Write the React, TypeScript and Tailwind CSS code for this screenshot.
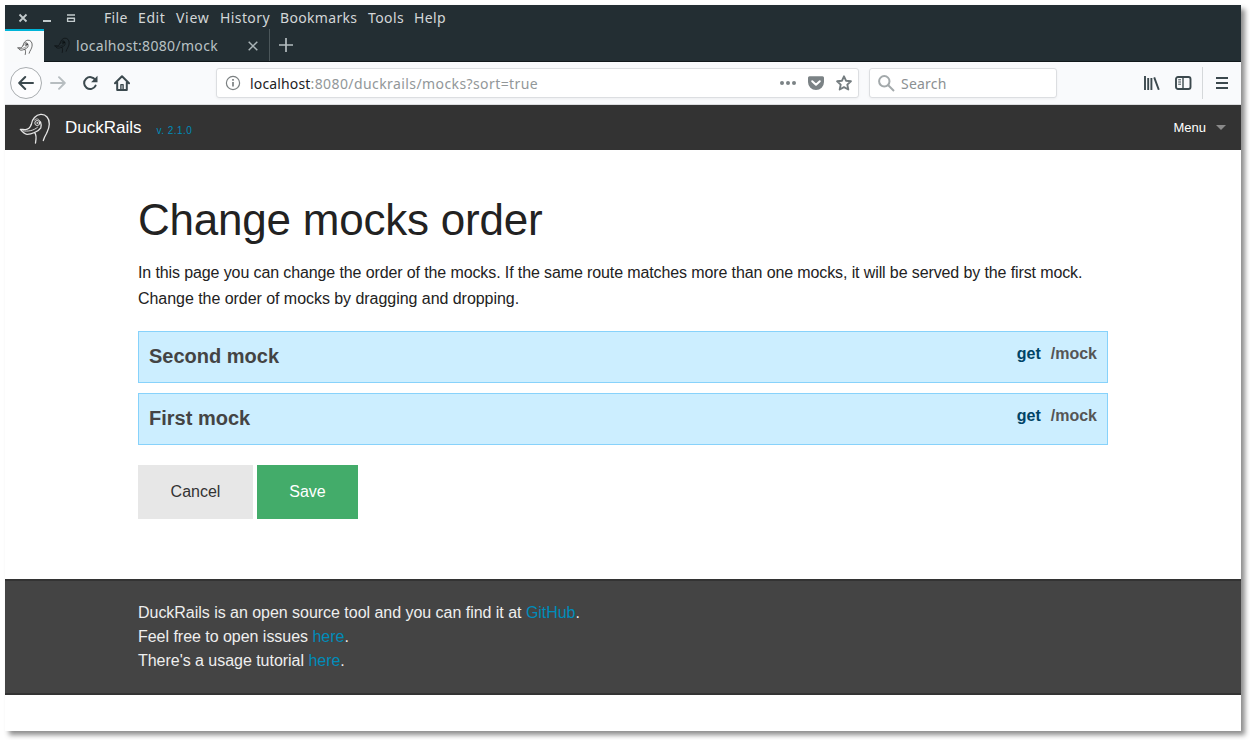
import React from "react";

const ui = "font-['Noto_Sans','Open_Sans',sans-serif]";

function Duck({ className }: { className?: string }) {
  return (
    <svg viewBox="0 0 32 32" fill="none" stroke="currentColor" strokeLinecap="round" strokeLinejoin="round" className={className}>
      <path d="M12.300 12.500C13 7 17 2.800 21.700 2.400C27 2 30.500 6.500 30.300 12C30 17.500 28.500 19 27.500 21.500C26 24 25 26 24.300 28.500" strokeWidth="1.300" />
      <path d="M12.300 12.500C11 16 9 17.500 6.500 17.600C4.500 17.800 3 17.200 1.300 17.400C3 19.500 5 22 8 22.400C12 22.500 19.500 19.500 21.800 15.800C22.500 14 22.300 12 21.500 10" strokeWidth="1.300" />
      <path d="M4 18.800C9 19.800 15 18.500 18.500 15.300" strokeWidth="0.900" />
      <path d="M15.500 20.500C17.600 22.500 17.400 26 16.500 31" strokeWidth="1.300" />
      <circle cx="18.300" cy="11" r="2.500" strokeWidth="1" />
      <circle cx="18.300" cy="11" r="0.600" strokeWidth="0.800" />
      <path d="M15.500 8C17.500 6 20 6.500 21.500 10" strokeWidth="0.800" />
    </svg>
  );
}

const menus = [
  { label: "File", cls: "w-[34px] tracking-[0.3px]" },
  { label: "Edit", cls: "w-[38px] tracking-[0.6px]" },
  { label: "View", cls: "w-[44px] tracking-[0.7px]" },
  { label: "History", cls: "w-[60px] tracking-[0.4px]" },
  { label: "Bookmarks", cls: "w-[88px] tracking-[0.33px]" },
  { label: "Tools", cls: "w-[46px] tracking-[0.4px]" },
  { label: "Help", cls: "w-[40px] tracking-[0.4px]" },
];

function MenuBar() {
  return (
    <div className="flex h-[24px] items-center text-[14px] text-[#d3d7d8]">
      <svg className="ml-[12px] h-[12px] w-[60px] shrink-0" viewBox="0 0 60 12" fill="none" stroke="#c3cbcd">
        <path d="M2.500 3.500l7 7M9.500 3.500l-7 7" strokeWidth="1.800" />
        <path d="M26 10h8" strokeWidth="2" />
        <path d="M50 4h8M50 7.200h8M50 10.400h8M50.600 7v3.500M57.400 7v3.500" strokeWidth="1.400" />
      </svg>
      <div className="ml-[27px] flex">
        {menus.map((m) => (
          <span key={m.label} className={"shrink-0 whitespace-nowrap " + m.cls}>{m.label}</span>
        ))}
      </div>
    </div>
  );
}

function Tabs() {
  return (
    <div className="flex h-[33px] border-b border-[#11181b]">
      <div className="-mb-px flex h-[33px] w-[39px] items-center justify-center border-t-2 border-[#00b4d8] bg-[#f9fafb] text-[#222]">
        <Duck className="size-[16px]" />
      </div>
      <div className="flex w-[226px] items-center border-r border-[#4b565a] bg-clip-padding pl-[10px] text-[#b9c2c4]">
        <Duck className="size-[16px] text-[#0b0e0f]" />
        <span className="ml-[6px] w-[172px] whitespace-nowrap text-[14px] tracking-[0.32px]">localhost:8080/mock</span>
        <svg className="mt-[2px] h-[10px] w-[10px]" viewBox="0 0 10 10" stroke="#aab4b7" strokeWidth="1.500">
          <path d="M.7.7l8.600 8.600M9.300.7L.7 9.300" />
        </svg>
      </div>
      <svg className="ml-[9px] mt-[9px] h-[14px] w-[14px]" viewBox="0 0 14 14" stroke="#b4bdc0" strokeWidth="1.700">
        <path d="M7 0v14M0 7h14" />
      </svg>
    </div>
  );
}

function Toolbar() {
  return (
    <div className="flex h-[43px] items-center border-b border-[#dcdddf] bg-[#f9fafc] text-[#41505a]">
      <div className="ml-[5px] flex size-[32px] shrink-0 items-center justify-center rounded-full border border-[#a9adb0] bg-[#fdfdfe]">
        <svg className="size-[16px]" viewBox="0 0 16 16" fill="none" stroke="#3c494e" strokeWidth="2" strokeLinecap="round" strokeLinejoin="round">
          <path d="M15 8H1.500M7.200 2L1.200 8l6 6" />
        </svg>
      </div>
      <svg className="ml-[8px] size-[16px]" viewBox="0 0 16 16" fill="none" stroke="#b7bdc0" strokeWidth="1.900" strokeLinecap="round" strokeLinejoin="round">
        <path d="M1 8h13.500M9 2.200L14.800 8 9 13.800" />
      </svg>
      <svg className="ml-[16px] size-[16px]" viewBox="0 0 16 16" fill="none" stroke="#3c494e" strokeWidth="2">
        <path d="M13.300 5A6 6 0 1 0 13.600 10.600" strokeLinecap="round" />
        <path d="M15.500.8v6.400H9.100z" fill="#3c494e" stroke="none" />
      </svg>
      <svg className="ml-[16px] size-[16px]" viewBox="0 0 16 16" fill="none" stroke="#3c494e" strokeWidth="2" strokeLinejoin="round" strokeLinecap="round">
        <path d="M1 8.200L8 1.200l7 7M3.200 7.500V15h9.600V7.500" />
        <path d="M6.900 14.500V9.600h2.200v4.900" strokeWidth="1.400" />
      </svg>
      <div className="ml-[86px] flex h-[30px] w-[643px] items-center rounded-[3px] border border-[#dcdee1] bg-white shadow-[0_1px_3px_rgba(0,0,0,0.05)]">
        <svg className="ml-[8px] size-[16px] shrink-0" viewBox="0 0 16 16" fill="none" stroke="#7b8082" strokeWidth="1.200">
          <circle cx="8" cy="8" r="6.600" />
          <path d="M8 7v4.600M8 4v1.700" strokeWidth="1.700" />
        </svg>
        <div className="ml-[9px] flex-1 whitespace-nowrap text-[14px] tracking-[0.41px] text-[#929799]">
          <span className="tracking-[0.15px] text-[#1c2123]">localhost</span>:8080/duckrails/mocks?sort=true
        </div>
        <svg className="h-[4px] w-[16px]" viewBox="0 0 16 4" fill="#7b8285">
          <circle cx="2" cy="2" r="2" /><circle cx="8" cy="2" r="2" /><circle cx="14" cy="2" r="2" />
        </svg>
        <svg className="ml-[12px] h-[16px] w-[16px]" viewBox="0 0 16 16">
          <path d="M1.500 1.200h13A1.500 1.500 0 0 1 16 2.700V7A8 8 0 0 1 0 7V2.700A1.500 1.500 0 0 1 1.500 1.200z" fill="#7b8285" />
          <path d="M4.200 6.200L8 9.800l3.800-3.600" stroke="#fff" strokeWidth="2" fill="none" strokeLinecap="round" strokeLinejoin="round" />
        </svg>
        <svg className="ml-[12px] mr-[6px] size-[16px]" viewBox="0 0 16 16" fill="none" stroke="#747c7f" strokeWidth="1.900" strokeLinejoin="round">
          <path d="M8 1.300l2 4.400 4.900.6-3.600 3.300 1 4.900L8 12.200l-4.300 2.300 1-4.900L1.100 6.300l4.900-.6z" />
        </svg>
      </div>
      <div className="ml-[10px] flex h-[30px] w-[188px] items-center rounded-[3px] border border-[#dcdee1] bg-white shadow-[0_1px_3px_rgba(0,0,0,0.05)]">
        <svg className="ml-[8px] size-[17px]" viewBox="0 0 17 17" fill="none" stroke="#a3a9ab" strokeWidth="2">
          <circle cx="6.300" cy="6.300" r="5.200" /><path d="M10 10l6 6" />
        </svg>
        <span className="ml-[6px] text-[14px] tracking-[0.2px] text-[#8b9092]">Search</span>
      </div>
      <svg className="ml-[87px] h-[14px] w-[16px]" viewBox="0 0 16 14" fill="none" stroke="#3c494e" strokeWidth="1.900">
        <path d="M1 0v14M4.200 2v12M7.400 2v12M10.200 1.300l4.600 12.500" />
      </svg>
      <svg className="ml-[15px] h-[14px] w-[17px]" viewBox="0 0 17 14" fill="none" stroke="#3c494e">
        <rect x="1" y="1" width="14.500" height="12" rx="2" strokeWidth="1.900" />
        <path d="M8 1v12" strokeWidth="1.400" />
        <path d="M3.200 3.800h2.800M3.200 6h2.800M3.200 8.200h2.800" strokeWidth="1" />
      </svg>
      <div className="ml-[10px] h-[32px] w-px bg-[#d5d8da]" />
      <svg className="ml-[13px] h-[12px] w-[12px]" viewBox="0 0 12 12" stroke="#3c494e" strokeWidth="2">
        <path d="M0 1h12M0 6h12M0 11h12" />
      </svg>
    </div>
  );
}

function Mock({ name }: { name: string }) {
  return (
    <li className="mb-[10px] flex h-[52px] justify-between border border-[#87d2fb] bg-[#cceeff] px-[10px] font-bold">
      <span className="pt-[10px] text-[20px] leading-[28px] text-[#444]">{name}</span>
      <span className="pt-[10px] text-[16px] leading-[24px] text-[#555]">
        <span className="mr-[10px] text-[#004466]">get</span>/mock
      </span>
    </li>
  );
}

export default function App() {
  return (
    <div className="h-[740px] w-[1250px] overflow-hidden bg-white p-[5px]">
      <div className="flex h-[726px] w-[1236px] flex-col bg-white font-['Liberation_Sans',Arial,sans-serif] shadow-[4px_4px_5px_rgba(0,0,0,0.45)]">
        <div className={"bg-[#232e33] " + ui}>
          <MenuBar />
          <Tabs />
        </div>
        <div className={ui}>
          <Toolbar />
        </div>
        <header className="flex h-[45px] items-center bg-[#333]">
          <Duck className="ml-[14px] size-[32px] text-[#e6e6e6]" />
          <span className="ml-[14px] pt-[1px] text-[17px] text-white">DuckRails</span>
          <span className="ml-[15px] pt-[5px] text-[10px] tracking-[0.450px] text-[#008cba]">v. 2.1.0</span>
          <span className="ml-auto text-[13px] text-white">Menu</span>
          <span className="ml-[10px] mr-[15px] border-x-[5px] border-t-[5px] border-x-transparent border-t-[#8a8a8a]" />
        </header>
        <main className="mx-auto h-[429px] w-[970px] pt-[39px] text-[#222]">
          <h1 className="whitespace-nowrap text-[44px] leading-[62px] tracking-[-0.22px]">Change mocks order</h1>
          <p className="mt-[9px] whitespace-nowrap text-[16px] leading-[26px]">
            <span className="tracking-[-0.113px]">In this page you can change the order of the mocks. If the same route matches more than one mocks, it will be served by the first mock.</span>
            <br />
            <span className="tracking-[-0.045px]">Change the order of mocks by dragging and dropping.</span>
          </p>
          <ul className="mt-[19px]">
            <Mock name="Second mock" />
            <Mock name="First mock" />
          </ul>
          <div className="mt-[20px] flex gap-[4px] text-[16px]">
            <button className="h-[54px] w-[115px] bg-[#e7e7e7] text-[#333]">Cancel</button>
            <button className="h-[54px] w-[101px] bg-[#43ac6a] text-white">Save</button>
          </div>
        </main>
        <footer className="h-[116px] border-y-2 border-[#333] bg-[#444] pl-[133px] pt-[20px] text-[16px] leading-[24px] tracking-[-0.03px] text-[#eee]">
          <p>DuckRails is an open source tool and you can find it at <a className="text-[#008cba]">GitHub</a>.</p>
          <p>Feel free to open issues <a className="text-[#008cba]">here</a>.</p>
          <p>There's a usage tutorial <a className="text-[#008cba]">here</a>.</p>
        </footer>
      </div>
    </div>
  );
}
